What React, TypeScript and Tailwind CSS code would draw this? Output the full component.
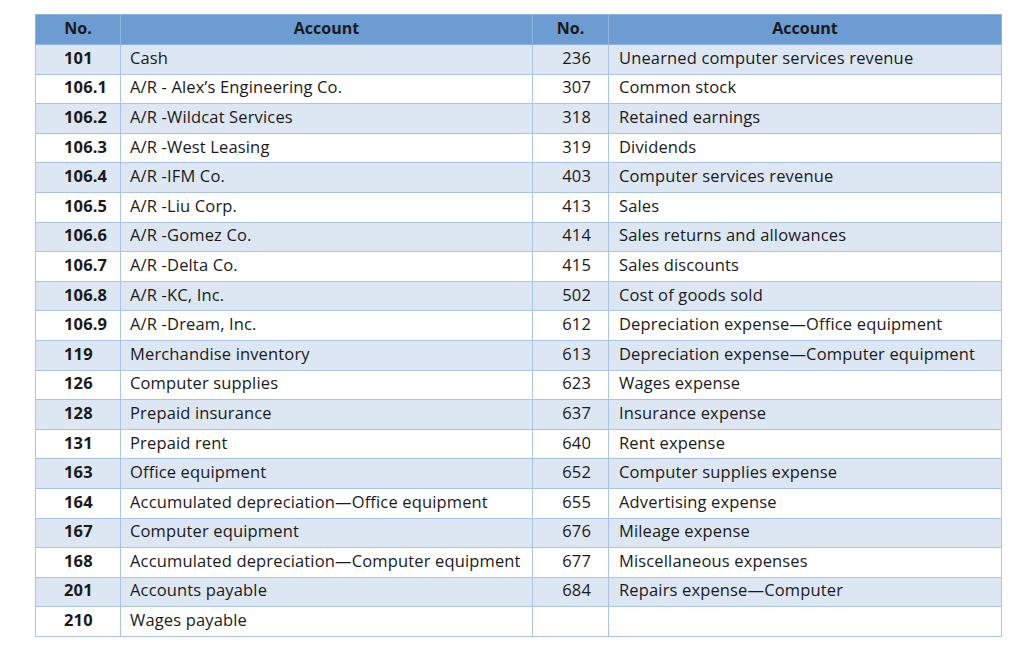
const left: [string, string][] = [
  ['101', 'Cash'],
  ['106.1', 'A/R - Alex’s Engineering Co.'],
  ['106.2', 'A/R -Wildcat Services'],
  ['106.3', 'A/R -West Leasing'],
  ['106.4', 'A/R -IFM Co.'],
  ['106.5', 'A/R -Liu Corp.'],
  ['106.6', 'A/R -Gomez Co.'],
  ['106.7', 'A/R -Delta Co.'],
  ['106.8', 'A/R -KC, Inc.'],
  ['106.9', 'A/R -Dream, Inc.'],
  ['119', 'Merchandise inventory'],
  ['126', 'Computer supplies'],
  ['128', 'Prepaid insurance'],
  ['131', 'Prepaid rent'],
  ['163', 'Office equipment'],
  ['164', 'Accumulated depreciation—Office equipment'],
  ['167', 'Computer equipment'],
  ['168', 'Accumulated depreciation—Computer equipment'],
  ['201', 'Accounts payable'],
  ['210', 'Wages payable'],
];

const right: [string, string][] = [
  ['236', 'Unearned computer services revenue'],
  ['307', 'Common stock'],
  ['318', 'Retained earnings'],
  ['319', 'Dividends'],
  ['403', 'Computer services revenue'],
  ['413', 'Sales'],
  ['414', 'Sales returns and allowances'],
  ['415', 'Sales discounts'],
  ['502', 'Cost of goods sold'],
  ['612', 'Depreciation expense—Office equipment'],
  ['613', 'Depreciation expense—Computer equipment'],
  ['623', 'Wages expense'],
  ['637', 'Insurance expense'],
  ['640', 'Rent expense'],
  ['652', 'Computer supplies expense'],
  ['655', 'Advertising expense'],
  ['676', 'Mileage expense'],
  ['677', 'Miscellaneous expenses'],
  ['684', 'Repairs expense—Computer'],
  ['', ''],
];

export default function App() {
  return (
    <div className="h-[658px] w-[1024px] bg-white pl-[35px] pt-[14px] font-['Open_Sans','Liberation_Sans',sans-serif] text-[16px] leading-[20px] text-[#1a1a1a]">
      <table className="w-[966px] table-fixed border-collapse">
        <colgroup>
          <col className="w-[85px]" />
          <col className="w-[412px]" />
          <col className="w-[76px]" />
          <col className="w-[393px]" />
        </colgroup>
        <thead>
          <tr className="h-[30px] bg-[#6c9cd2] font-bold">
            <th className="border border-[#8fb2de] pb-[3px] text-center">No.</th>
            <th className="border border-[#8fb2de] pb-[3px] text-center">Account</th>
            <th className="border border-[#8fb2de] pb-[3px] text-center">No.</th>
            <th className="border border-[#8fb2de] pb-[3px] text-center">Account</th>
          </tr>
        </thead>
        <tbody className="text-[16.5px] tracking-[0.15px]">
          {left.map(([no, name], i) => {
            const [rNo, rName] = right[i];
            return (
              <tr key={no} className={i % 2 === 0 ? 'h-[29.6px] bg-[#dde7f3]' : 'h-[29.6px] bg-white'}>
                <td className="border border-[#a9c4e6] pb-[3px] pl-[28px] font-bold">{no}</td>
                <td className="border border-[#a9c4e6] pb-[3px] pl-[9px]">{name}</td>
                <td className="border border-[#a9c4e6] pb-[3px] pr-[17px] text-right">{rNo}</td>
                <td className="border border-[#a9c4e6] pb-[3px] pl-[10px]">{rName}</td>
              </tr>
            );
          })}
        </tbody>
      </table>
    </div>
  );
}
